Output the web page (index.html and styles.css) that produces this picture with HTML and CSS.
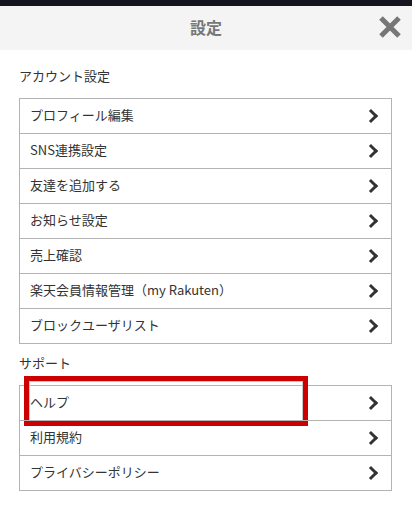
FILE: index.html
```html
<!DOCTYPE html>
<html lang="ja">
<head>
    <meta charset="UTF-8">
    <meta name="viewport" content="width=device-width, initial-scale=1.0">
    <title>設定</title>
    <link rel="stylesheet" href="styles.css">
</head>
<body>
    <div class="topbar"></div>

    <header class="header">
        <h1>設定</h1>
        <button class="close-btn" aria-label="閉じる">
            <svg width="24" height="24" viewBox="0 0 24 24">
                <path d="M3 3 L21 21 M21 3 L3 21" stroke="#777" stroke-width="5" fill="none"/>
            </svg>
        </button>
    </header>

    <main class="content">
        <h2 class="section-title">アカウント設定</h2>
        <ul class="menu">
            <li><span>プロフィール編集</span><i class="chevron"></i></li>
            <li><span>SNS連携設定</span><i class="chevron"></i></li>
            <li><span>友達を追加する</span><i class="chevron"></i></li>
            <li><span>お知らせ設定</span><i class="chevron"></i></li>
            <li><span>売上確認</span><i class="chevron"></i></li>
            <li><span>楽天会員情報管理（my Rakuten）</span><i class="chevron"></i></li>
            <li><span>ブロックユーザリスト</span><i class="chevron"></i></li>
        </ul>

        <h2 class="section-title">サポート</h2>
        <ul class="menu">
            <li class="marked"><span>ヘルプ</span><i class="chevron"></i><div class="highlight"></div></li>
            <li><span>利用規約</span><i class="chevron"></i></li>
            <li><span>プライバシーポリシー</span><i class="chevron"></i></li>
        </ul>
    </main>
</body>
</html>
```

FILE: styles.css
```css
body {
    margin: 0;
    font-family: "Noto Sans CJK JP", "Noto Sans", sans-serif;
    color: #333;
    background: #fff;
}
.topbar {
    height: 6px;
    background: #14151f;
}
.header {
    height: 44px;
    background: #f4f4f4;
    display: flex;
    align-items: center;
    justify-content: center;
    position: relative;
}
.header h1 {
    margin: 0 0 2px;
    font-size: 16px;
    font-weight: bold;
    color: #777;
}
.close-btn {
    position: absolute;
    right: 10px;
    top: 9px;
    padding: 0;
    border: none;
    background: none;
    width: 24px;
    height: 24px;
}
.content {
    padding: 0 20px 0 19px;
}
.section-title {
    margin: 17px 0 11px;
    font-size: 13px;
    font-weight: normal;
    line-height: 18px;
    padding-bottom: 2px;
}
.menu + .section-title {
    margin-top: 10px;
}
.menu {
    list-style: none;
    margin: 0;
    padding: 0;
    border: 1px solid #b3b3b3;
    border-top: none;
}
.menu li {
    height: 34px;
    border-top: 1px solid #b3b3b3;
    display: flex;
    align-items: center;
    justify-content: space-between;
    padding: 0 13px 0 10px;
    font-size: 13px;
    position: relative;
}
.menu li span {
    margin-bottom: 3px;
}
.chevron {
    width: 7px;
    height: 7px;
    border-top: 3px solid #333;
    border-right: 3px solid #333;
    transform: rotate(45deg);
    margin-right: 2px;
}
.highlight {
    position: absolute;
    left: 4px;
    top: -10px;
    width: 274px;
    height: 40px;
    border: 5px solid #cc0000;
    box-shadow: inset 0 0 0 1px #c8c8c8;
}
```
